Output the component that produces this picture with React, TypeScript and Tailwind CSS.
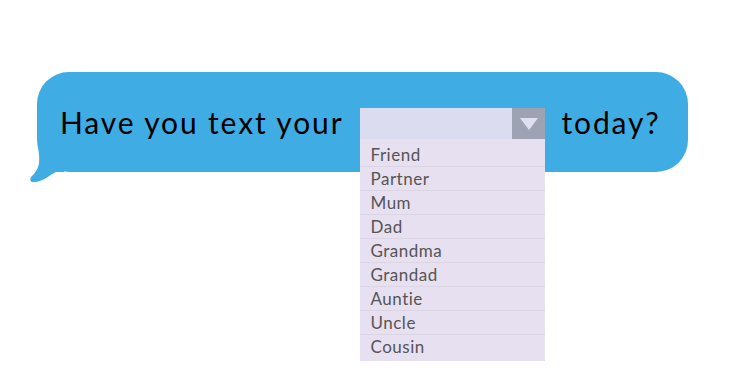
import { useState } from "react";

const OPTIONS = ["Friend", "Partner", "Mum", "Dad", "Grandma", "Grandad", "Auntie", "Uncle", "Cousin"];

// Message bubble with an open fake-select listing who to text
export default function App() {
  const [open] = useState(true);

  return (
    <div className="min-h-[385px] w-[729px] bg-white pl-[37px] pt-[72px]" style={{ fontFamily: "Lato, 'Open Sans', sans-serif" }}>
      <div className="relative flex h-[100px] w-[651px] items-center rounded-[32px] bg-[#3fade3] pl-[23px]">
        {/* tail */}
        <svg className="absolute left-[-7px] top-[72px]" width="34" height="42" viewBox="0 0 34 42">
          <path d="M8 0 C 9 14, 12 22, 2 32 C -1 35, 0 39, 5 38 C 14 37, 18 32, 26 28 L 34 28 L 34 0 Z" fill="#3fade3" />
        </svg>

        <span className="text-[30px] tracking-[0.062em] text-black">Have you text your</span>

        <div className="relative ml-[17px] mr-[16px] mt-[3px]">
          <div className="flex h-[31px] w-[185px] bg-[#dcdcf0]">
            <div className="flex-1" />
            <div className="flex w-[33px] items-center justify-center bg-[#9ea3b4]">
              <svg width="18" height="14" viewBox="0 0 18 14">
                <path d="M0 1 L18 1 L9 13 Z" fill="#dfe0ef" />
              </svg>
            </div>
          </div>
          {open && (
            <ul className="absolute left-0 top-[31px] z-10 w-[185px] bg-[#e7e0f0] pb-[2px] pt-[4px]">
              {OPTIONS.map((o, i) => (
                <li
                  key={o}
                  className={
                    "h-[24px] pl-[10px] text-[17px] leading-[24px] tracking-[0.03em] text-[#555555] " +
                    (i < OPTIONS.length - 1 ? "border-b border-[#dcd6e4]" : "")
                  }
                >
                  {o}
                </li>
              ))}
            </ul>
          )}
        </div>

        <span className="text-[30px] tracking-[0.062em] text-black">today?</span>
      </div>
    </div>
  );
}
